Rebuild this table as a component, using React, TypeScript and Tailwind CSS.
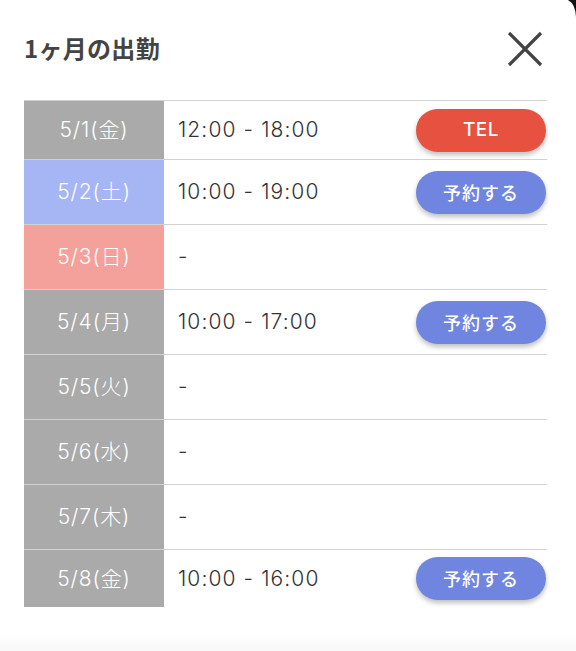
import React from "react";

type Row = {
  date: string;
  bg: string;
  time: string;
  btn?: "tel" | "book";
  h: string;
};

const rows: Row[] = [
  { date: "5/1(金)", bg: "bg-[#aaaaaa]", time: "12:00 - 18:00", btn: "tel", h: "h-[59px]" },
  { date: "5/2(土)", bg: "bg-[#a6b5f3]", time: "10:00 - 19:00", btn: "book", h: "h-[65px]" },
  { date: "5/3(日)", bg: "bg-[#f4a19b]", time: "-", h: "h-[65px]" },
  { date: "5/4(月)", bg: "bg-[#aaaaaa]", time: "10:00 - 17:00", btn: "book", h: "h-[65px]" },
  { date: "5/5(火)", bg: "bg-[#aaaaaa]", time: "-", h: "h-[65px]" },
  { date: "5/6(水)", bg: "bg-[#aaaaaa]", time: "-", h: "h-[65px]" },
  { date: "5/7(木)", bg: "bg-[#aaaaaa]", time: "-", h: "h-[65px]" },
  { date: "5/8(金)", bg: "bg-[#aaaaaa]", time: "10:00 - 16:00", btn: "book", h: "h-[58px]" },
];

const font = {
  fontFamily: '"Inter", "Noto Sans CJK JP", sans-serif',
};

export default function App() {
  return (
    <div
      className="relative w-[576px] h-[651px] bg-white overflow-hidden"
      style={font}
    >
      <svg
        className="absolute top-0 right-0"
        width="8"
        height="20"
        viewBox="0 0 8 20"
      >
        <path d="M0 0 H8 V17 Q7.5 4 0 0 Z" fill="#111" />
      </svg>

      <div className="flex items-center justify-between h-[100px] pb-[4px] pl-[24px] pr-[33px]">
        <h1
          className="text-[24px] font-bold text-[#444444] tracking-[0.3px]"
          style={{ fontFamily: '"Noto Sans CJK JP", sans-serif' }}
        >
          1ヶ月の出勤
        </h1>
        <svg width="36" height="36" viewBox="0 0 36 36" className="mt-[2px]">
          <path
            d="M2 2 L34 34 M34 2 L2 34"
            stroke="#444444"
            strokeWidth="3.2"
            strokeLinecap="butt"
          />
        </svg>
      </div>

      <div className="mx-[24px] w-[523px] flex flex-col">
        {rows.map((r, i) => (
          <div
            key={i}
            className={`flex border-t border-[#d2d2d2] ${r.h}`}
          >
            <div
              className={`w-[140px] flex items-center justify-center text-white text-[21px] font-light tracking-[0.9px] ${r.bg}`}
            >
              {r.date}
            </div>
            <div className="flex-1 flex items-center justify-between pl-[14px]">
              <span className="text-[21px] text-[#333333] font-light tracking-[1.1px]">
                {r.time}
              </span>
              {r.btn === "tel" && (
                <button className="w-[130px] h-[43px] rounded-full bg-[#e7513f] text-white text-[19px] font-medium tracking-[0.5px] shadow-[0_3px_5px_rgba(0,0,0,0.25)] mr-[1px]">
                  TEL
                </button>
              )}
              {r.btn === "book" && (
                <button
                  className="w-[130px] h-[43px] rounded-full bg-[#6f85e0] text-white text-[18px] font-medium tracking-[1px] shadow-[0_3px_5px_rgba(0,0,0,0.25)] mr-[1px]"
                  style={{ fontFamily: '"Noto Sans CJK JP", sans-serif' }}
                >
                  予約する
                </button>
              )}
            </div>
          </div>
        ))}
      </div>

      <div className="absolute left-0 right-0 bottom-0 h-[18px] bg-gradient-to-b from-white to-[#f8f8f8]" />
    </div>
  );
}
